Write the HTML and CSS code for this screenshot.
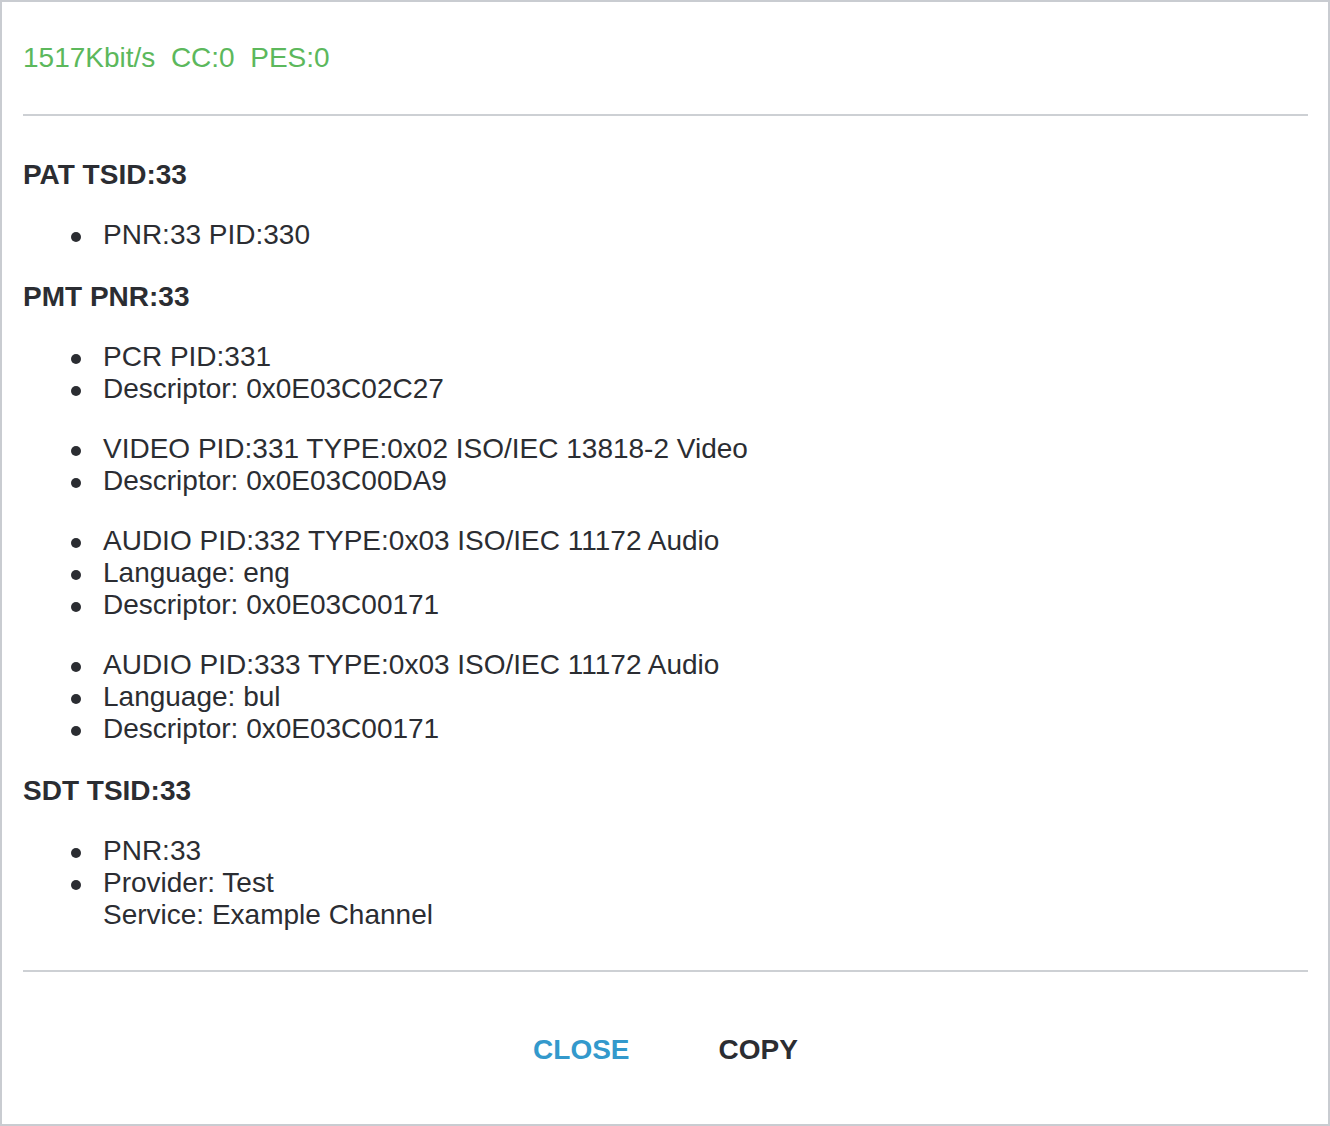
FILE: index.html
```html
<!DOCTYPE html>
<html lang="en">

<head>
    <meta charset="UTF-8">
    <meta name="viewport" content="width=device-width, initial-scale=1.0">
    <title>Stream info</title>
    <link rel="stylesheet" href="styles.css">
</head>

<body>
    <div class="dialog">
        <div class="dialog-head">
            <span class="status">1517Kbit/s&nbsp; CC:0&nbsp; PES:0</span>
        </div>
        <div class="dialog-body">
            <strong class="table-title">PAT TSID:33</strong>
            <ul>
                <li>PNR:33 PID:330</li>
            </ul>

            <strong class="table-title">PMT PNR:33</strong>
            <ul>
                <li>PCR PID:331</li>
                <li>Descriptor: 0x0E03C02C27</li>
            </ul>
            <ul>
                <li>VIDEO PID:331 TYPE:0x02 ISO/IEC 13818-2 Video</li>
                <li>Descriptor: 0x0E03C00DA9</li>
            </ul>
            <ul>
                <li>AUDIO PID:332 TYPE:0x03 ISO/IEC 11172 Audio</li>
                <li>Language: eng</li>
                <li>Descriptor: 0x0E03C00171</li>
            </ul>
            <ul>
                <li>AUDIO PID:333 TYPE:0x03 ISO/IEC 11172 Audio</li>
                <li>Language: bul</li>
                <li>Descriptor: 0x0E03C00171</li>
            </ul>

            <strong class="table-title">SDT TSID:33</strong>
            <ul>
                <li>PNR:33</li>
                <li>Provider: Test<br>Service: Example Channel</li>
            </ul>
        </div>
        <div class="dialog-foot">
            <button class="btn btn-close">Close</button>
            <button class="btn btn-copy">Copy</button>
        </div>
    </div>
</body>

</html>
```

FILE: styles.css
```css
html,
body {
    margin: 0;
    height: 100%;
}

body {
    font-family: "Liberation Sans", Arial, Helvetica, sans-serif;
    font-size: 28px;
    line-height: 32px;
    color: #2b2d32;
    background: #fff;
}

.dialog {
    box-sizing: border-box;
    height: 1126px;
    border: 2px solid #c9ccd1;
    padding: 0 20px 0 21px;
    display: flex;
    flex-direction: column;
}

.dialog-head {
    padding: 40px 0;
    border-bottom: 2px solid #cdd0d4;
}

.status {
    color: #5cb85c;
}

.dialog-body {
    padding: 41px 0 11px;
    border-bottom: 2px solid #cdd0d4;
}

.table-title {
    display: block;
    padding-top: 2px;
    font-weight: bold;
}

ul {
    margin: 28px 0;
    padding-left: 80px;
    list-style: none;
}

li::before {
    content: "";
    display: inline-block;
    width: 10px;
    height: 10px;
    margin-left: -32px;
    margin-right: 22px;
    border-radius: 50%;
    background: currentColor;
    vertical-align: middle;
}

.dialog-foot {
    flex: 1;
    display: flex;
    justify-content: center;
    align-items: center;
    gap: 89px;
    padding-top: 4px;
}

.btn {
    padding: 0;
    border: none;
    background: none;
    font-family: inherit;
    font-size: 28px;
    line-height: 32px;
    font-weight: bold;
    text-transform: uppercase;
    cursor: pointer;
}

.btn-close {
    color: #3399cc;
}

.btn-copy {
    color: #2b2d32;
}
```
